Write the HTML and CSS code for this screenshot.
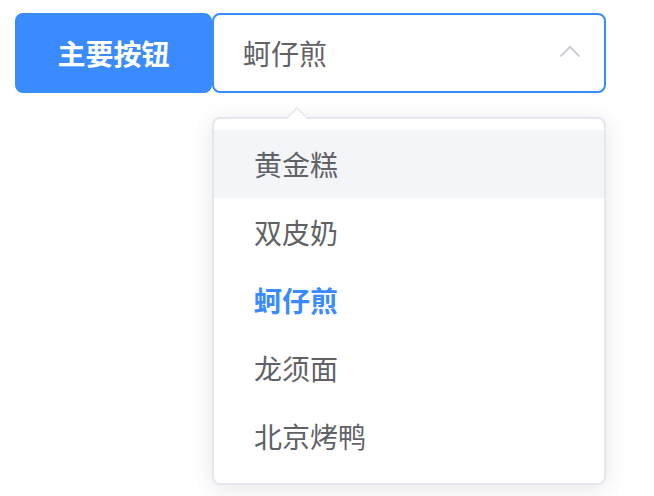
FILE: index.html
```html
<!doctype html>
<html>
<head>
<meta charset="utf-8">
<title>Select</title>
<link rel="stylesheet" href="styles.css">
</head>
<body>
	<div class="toolbar">
		<button class="btn-primary" type="button">主要按钮</button>
		<div class="select">
			<div class="select-input">
				<span class="select-value">蚵仔煎</span>
				<svg class="select-arrow" width="22" height="14" viewBox="0 0 22 14">
					<polyline points="1.5,12.5 11,3 20.5,12.5" fill="none" stroke="#c0c4cc" stroke-width="1.6"/>
				</svg>
			</div>
			<div class="dropdown">
				<div class="dropdown-arrow"></div>
				<ul class="dropdown-list">
					<li class="option hover">黄金糕</li>
					<li class="option">双皮奶</li>
					<li class="option selected">蚵仔煎</li>
					<li class="option">龙须面</li>
					<li class="option">北京烤鸭</li>
				</ul>
			</div>
		</div>
	</div>
</body>
</html>
```

FILE: styles.css
```css
body {
	margin: 0;
	padding: 13px 15px;
	background: #fff;
	font-family: "Noto Sans CJK SC", "Noto Sans", sans-serif;
	color: #606266;
}

.toolbar {
	display: flex;
	align-items: flex-start;
}

.btn-primary {
	height: 80px;
	width: 197px;
	padding: 0 40px;
	border: 2px solid #3a8bfd;
	border-radius: 8px;
	background-color: #3a8bfd;
	color: #fff;
	font-family: inherit;
	font-size: 28px;
	font-weight: 700;
	line-height: 1;
	white-space: nowrap;
}

.select {
	display: flex;
	flex-direction: column;
	width: 394px;
}

.select-input {
	display: flex;
	align-items: center;
	justify-content: space-between;
	height: 80px;
	box-sizing: border-box;
	padding: 0 23px 0 29px;
	border: 2px solid #3a8bfd;
	border-radius: 8px;
}

.select-value {
	font-size: 28px;
	line-height: 1;
	color: #606266;
}

.select-arrow {
	display: block;
	margin-top: -4px;
}

.dropdown {
	position: relative;
	margin-top: 24px;
	border: 2px solid #e4e7ed;
	border-radius: 8px;
	background: #fff;
	box-shadow: 0 4px 24px rgba(0, 0, 0, 0.1);
}

.dropdown-arrow {
	position: absolute;
	top: -12px;
	left: 71px;
	width: 0;
	height: 0;
	border-left: 12px solid transparent;
	border-right: 12px solid transparent;
	border-bottom: 12px solid #e4e7ed;
}

.dropdown-arrow::after {
	content: "";
	position: absolute;
	left: -10px;
	top: 2px;
	border-left: 10px solid transparent;
	border-right: 10px solid transparent;
	border-bottom: 10px solid #fff;
}

.dropdown-list {
	list-style-type: none;
	margin: 0;
	padding: 11px 0 13px;
}

.option {
	height: 68px;
	line-height: 68px;
	padding: 0 40px;
	font-size: 28px;
	color: #606266;
}

.option.hover {
	background-color: #f4f5f8;
}

.option.selected {
	color: #3a8bfd;
	font-weight: 700;
}
```
